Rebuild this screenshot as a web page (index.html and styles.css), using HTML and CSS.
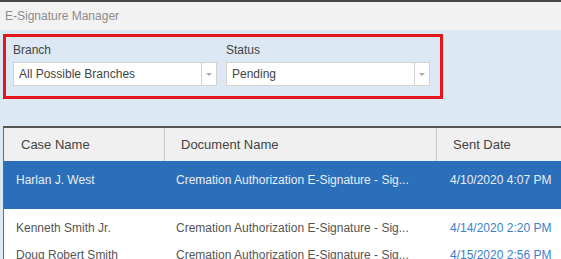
FILE: index.html
```html
<!DOCTYPE html>
<html lang="en">
<head>
    <meta charset="UTF-8">
    <title>E-Signature Manager</title>
    <link rel="stylesheet" href="styles.css">
</head>
<body>
    <div class="window">
        <div class="titlebar">E-Signature Manager</div>
        <section class="filters">
            <div class="filter-box">
                <div class="field">
                    <div class="field-label">Branch</div>
                    <div class="select">
                        <span class="select-value">All Possible Branches</span>
                        <span class="select-btn"><span class="caret"></span></span>
                    </div>
                </div>
                <div class="field">
                    <div class="field-label">Status</div>
                    <div class="select">
                        <span class="select-value">Pending</span>
                        <span class="select-btn"><span class="caret"></span></span>
                    </div>
                </div>
            </div>
        </section>
        <section class="grid">
            <div class="grid-head">
                <div class="col col-case">Case Name</div>
                <div class="col col-doc">Document Name</div>
                <div class="col col-date">Sent Date</div>
            </div>
            <div class="grid-row selected">
                <div class="col col-case">Harlan J. West</div>
                <div class="col col-doc">Cremation Authorization E-Signature - Sig...</div>
                <div class="col col-date">4/10/2020 4:07 PM</div>
            </div>
            <div class="grid-row">
                <div class="col col-case">Kenneth Smith Jr.</div>
                <div class="col col-doc">Cremation Authorization E-Signature - Sig...</div>
                <div class="col col-date">4/14/2020 2:20 PM</div>
            </div>
            <div class="grid-row">
                <div class="col col-case">Doug Robert Smith</div>
                <div class="col col-doc">Cremation Authorization E-Signature - Sig...</div>
                <div class="col col-date">4/15/2020 2:56 PM</div>
            </div>
        </section>
    </div>
</body>
</html>
```

FILE: styles.css
```css
:root {
    --panel: #dce8f4;
    --title-bg: #f2f2f2;
    --red: #e3161e;
    --text: #555;
    --select-blue: #2b6fba;
    --date-blue: #3d7fc9;
}
html, body {
    margin: 0;
    padding: 0;
    width: 561px;
    height: 259px;
    overflow: hidden;
    background: var(--panel);
    font-family: 'Liberation Sans', Arial, sans-serif;
    color: var(--text);
}
.window {
    height: 259px;
    display: flex;
    flex-direction: column;
    border-top: 2px solid #474747;
    box-sizing: border-box;
}
.titlebar {
    height: 28px;
    line-height: 28px;
    padding-left: 5px;
    background: var(--title-bg);
    color: #8c8c8c;
    font-size: 12px;
}
.filters {
    height: 96px;
    padding: 4px 0 0 3px;
    box-sizing: border-box;
}
.filter-box {
    width: 440px;
    height: 65px;
    box-sizing: border-box;
    border: 3px solid var(--red);
    padding: 6px 0 0 7px;
    display: flex;
    gap: 9px;
}
.field {
    width: 204px;
}
.field-label {
    font-size: 12px;
    color: #444;
    height: 19px;
    line-height: 14px;
}
.select {
    height: 24px;
    box-sizing: border-box;
    border: 1px solid #d2d2d2;
    background: #fff;
    display: flex;
    align-items: center;
}
.select-value {
    flex: 1;
    padding-left: 5px;
    font-size: 12px;
    color: #444;
}
.select-btn {
    width: 14px;
    height: 100%;
    border-left: 1px solid #d2d2d2;
    display: flex;
    align-items: center;
    justify-content: center;
}
.caret {
    width: 0;
    height: 0;
    border-left: 3px solid transparent;
    border-right: 3px solid transparent;
    border-top: 3px solid #aaa;
}
/* grid */
.grid {
    flex: 1;
    min-height: 0;
    overflow: hidden;
    margin-left: 3px;
    border-top: 2px solid #555;
    border-left: 1px solid #6a6a6a;
    background: #fff;
}
.grid-head {
    display: flex;
    height: 33px;
    background: #f0f0f0;
    font-size: 13px;
    color: #444;
}
.grid-head .col {
    line-height: 33px;
    padding-left: 16px;
}
.grid-head .col-case {
    padding-left: 17px;
}
.grid-head .col + .col {
    border-left: 1px solid #c4c4c4;
}
.col-case {
    width: 160px;
    box-sizing: border-box;
    flex-shrink: 0;
}
.col-doc {
    width: 272px;
    box-sizing: border-box;
    flex-shrink: 0;
}
.col-date {
    flex: 1;
    white-space: nowrap;
}
.grid-row {
    display: flex;
    height: 27px;
    line-height: 27px;
    font-size: 12px;
    color: var(--text);
}
.grid-row .col {
    padding-left: 12px;
}
.grid-row .col-date {
    padding-left: 14px;
    color: var(--date-blue);
}
.grid-row.selected {
    height: 48px;
    padding-top: 6px;
    box-sizing: border-box;
    background: var(--select-blue);
    color: #e8eef6;
    margin-bottom: 6px;
}
.grid-row.selected .col-date {
    color: #e8eef6;
}
```
